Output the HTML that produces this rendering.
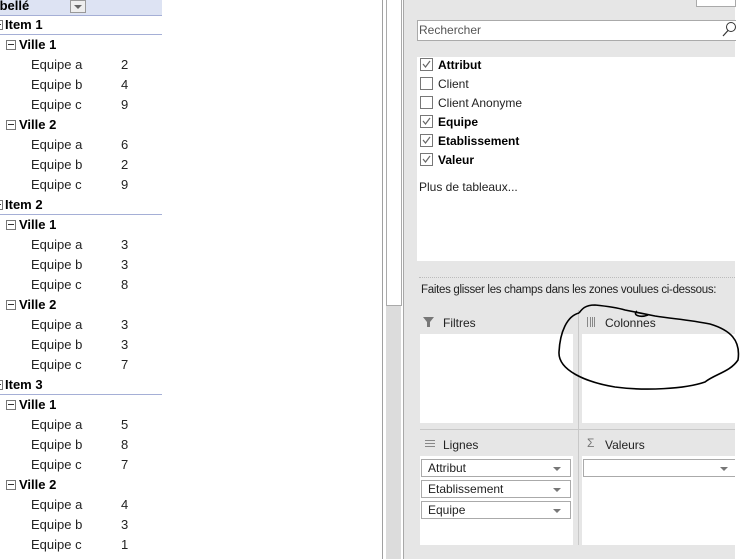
<!DOCTYPE html><html><head><style>
body{margin:0;width:741px;height:559px;position:relative;overflow:hidden;background:#fff;font-family:"Liberation Sans",sans-serif;font-size:12px;color:#222}
.a{position:absolute;white-space:nowrap}
.r{position:absolute;font-size:13px;line-height:20px;white-space:nowrap}
.b{font-weight:bold;color:#000}
.m{display:inline-block;width:8px;height:8px;border:1px solid #777;position:relative;top:-1px;margin-right:3px;vertical-align:middle}
.m:after{content:"";position:absolute;left:1px;right:1px;top:3px;height:1px;background:#333}
.cb{position:absolute;left:420px;width:11px;height:11px;border:1px solid #777;background:#fff}
.ft{position:absolute;left:438px;font-size:12px;line-height:14px}
.dd{position:absolute;left:421px;border:1px solid #aaa;background:#fff;font-size:12px;line-height:16px;padding-left:6px;box-sizing:border-box;width:150px;height:18px}
.tri{position:absolute;right:9px;top:7px;border-left:4px solid transparent;border-right:4px solid transparent;border-top:4px solid #777}
</style></head><body>
<div class="a" style="left:0;top:0;width:162px;height:15px;background:#dde3f3;border-bottom:1px solid #a5afd6"></div>
<div class="r b" style="left:-4px;top:-4px">ibellé</div>
<div class="a" style="left:70px;top:0;width:14px;height:11px;border:1px solid #999;background:#eee"><div style="position:absolute;left:3px;top:4px;border-left:4px solid transparent;border-right:4px solid transparent;border-top:4px solid #666"></div></div>
<div id="t"></div>
<div class="a" style="left:382px;top:0;width:1px;height:559px;background:#a0a0a0"></div>
<div class="a" style="left:386px;top:0;width:15px;height:559px;background:#dcdcdc"></div>
<div class="a" style="left:386px;top:0;width:14px;height:305px;background:#fff;border:1px solid #aaa;border-top:none"></div>
<div class="a" style="left:403px;top:0;width:1px;height:559px;background:#a8a8a8"></div>
<div class="a" style="left:404px;top:0;width:331px;height:559px;background:#e6e6e6"></div>
<div class="a" style="left:696px;top:0;width:38px;height:6px;background:#fff;border:1px solid #aaa;border-top:none"></div>
<div class="a" style="left:417px;top:20px;width:318px;height:19px;background:#fff;border-top:1px solid #aaa;border-bottom:1px solid #aaa;border-left:1px solid #aaa"></div>
<div class="a" style="left:419px;top:23px;font-size:12px;color:#555">Rechercher</div>
<svg class="a" style="left:722px;top:21px" width="14" height="18"><circle cx="9" cy="6" r="4.5" fill="none" stroke="#333"/><line x1="6" y1="9.5" x2="1" y2="15" stroke="#333" stroke-width="1.2"/></svg>
<div class="a" style="left:417px;top:57px;width:318px;height:204px;background:#fff"></div>
<div class="cb" style="top:58px"></div><div class="cb" style="top:77px"></div><div class="cb" style="top:96px"></div><div class="cb" style="top:115px"></div><div class="cb" style="top:134px"></div><div class="cb" style="top:153px"></div>
<svg class="a" style="left:420px;top:58px" width="13" height="110" fill="none" stroke="#666" stroke-width="1.2"><path d="M3 6l2.5 3L10 3M3 63l2.5 3L10 60M3 82l2.5 3L10 79M3 101l2.5 3L10 98"/></svg>
<div class="ft b" style="top:58px">Attribut</div>
<div class="ft" style="top:77px">Client</div>
<div class="ft" style="top:96px">Client Anonyme</div>
<div class="ft b" style="top:115px">Equipe</div>
<div class="ft b" style="top:134px">Etablissement</div>
<div class="ft b" style="top:153px">Valeur</div>
<div class="a" style="left:419px;top:180px;font-size:12px">Plus de tableaux...</div>
<div class="a" style="left:419px;top:277px;width:316px;border-top:1px dotted #bbb"></div>
<div class="a" style="left:421px;top:284px;font-size:11.5px;letter-spacing:-0.3px">Faites glisser les champs dans les zones voulues ci-dessous:</div>
<svg class="a" style="left:423px;top:316px" width="12" height="12"><path d="M0 1h11L7 6v5H4V6z" fill="#777"/></svg>
<div class="a" style="left:443px;top:316px;font-size:12px">Filtres</div>
<svg class="a" style="left:587px;top:317px" width="10" height="10" fill="#888"><rect x="0" y="0" width="1" height="10"/><rect x="3" y="0" width="1" height="10"/><rect x="5" y="0" width="1" height="10"/><rect x="7" y="0" width="1" height="10"/></svg>
<div class="a" style="left:605px;top:316px;font-size:12px">Colonnes</div>
<div class="a" style="left:420px;top:334px;width:153px;height:89px;background:#fff"></div>
<div class="a" style="left:582px;top:334px;width:153px;height:89px;background:#fff"></div>
<div class="a" style="left:420px;top:429px;width:315px;height:1px;background:#c8c8c8"></div>
<div class="a" style="left:578px;top:310px;width:1px;height:235px;background:#c8c8c8"></div>
<svg class="a" style="left:425px;top:439px" width="10" height="10" fill="#888"><rect y="1" width="10" height="1"/><rect y="4" width="10" height="1"/><rect y="7" width="10" height="1"/></svg>
<div class="a" style="left:443px;top:438px;font-size:12px">Lignes</div>
<div class="a" style="left:587px;top:436px;font-size:12px;color:#777">Σ</div>
<div class="a" style="left:605px;top:438px;font-size:12px">Valeurs</div>
<div class="a" style="left:420px;top:456px;width:153px;height:89px;background:#fff"></div>
<div class="a" style="left:582px;top:456px;width:153px;height:89px;background:#fff"></div>
<div class="dd" style="top:459px">Attribut<div class="tri"></div></div>
<div class="dd" style="top:480px">Etablissement<div class="tri"></div></div>
<div class="dd" style="top:501px">Equipe<div class="tri"></div></div>
<div class="dd" style="top:459px;left:583px;width:152px;border-right:none"><div class="tri" style="right:7px"></div></div>
<svg class="a" style="left:555px;top:302px" width="186" height="92" fill="none" stroke="#000" stroke-width="1.6"><path d="M24 11C12 14 5 30 4 50C3 68 30 80 60 85C90 89 130 87 150 80C160 72 175 70 183 58C186 38 175 28 155 22C135 18 120 17 100 14C90 12 80 10 70 8C60 5 50 4 40 3C30 3 27 7 24 11M82 9C77 13 85 16 93 13"/></svg>
<script>
var d=[["Item 1",0],["Ville 1",1],["Equipe a",2,2],["Equipe b",2,4],["Equipe c",2,9],["Ville 2",1],["Equipe a",2,6],["Equipe b",2,2],["Equipe c",2,9],["Item 2",0],["Ville 1",1],["Equipe a",2,3],["Equipe b",2,3],["Equipe c",2,8],["Ville 2",1],["Equipe a",2,3],["Equipe b",2,3],["Equipe c",2,7],["Item 3",0],["Ville 1",1],["Equipe a",2,5],["Equipe b",2,8],["Equipe c",2,7],["Ville 2",1],["Equipe a",2,4],["Equipe b",2,3],["Equipe c",2,1]];
var h="";d.forEach(function(e,i){var y=15+i*20;
if(e[1]==0){h+='<div class="r b" style="left:-3px;top:'+y+'px"><span class="m" style="width:4px;margin-right:2px"></span>'+e[0]+'</div><div class="a" style="left:0;top:'+(y+19)+'px;width:162px;height:1px;background:#a5afd6"></div>';}
else if(e[1]==1){h+='<div class="r b" style="left:6px;top:'+y+'px"><span class="m"></span>'+e[0]+'</div>';}
else{h+='<div class="r" style="left:31px;top:'+y+'px">'+e[0]+'</div><div class="r" style="left:121px;top:'+y+'px">'+e[2]+'</div>';}});
document.getElementById("t").innerHTML=h;
</script>
</body></html>
